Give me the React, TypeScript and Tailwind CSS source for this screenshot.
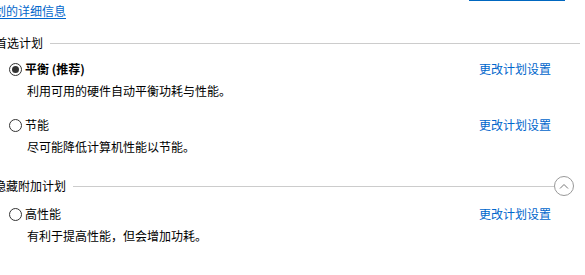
import React from 'react';

const Radio = ({ checked }: { checked?: boolean }) => (
  <span className="flex h-[13px] w-[13px] shrink-0 items-center justify-center rounded-full border border-[#333]">
    {checked && <span className="h-[7px] w-[7px] rounded-full bg-[#333]" />}
  </span>
);

const PlanRow = ({ name, desc, checked, bold }: { name: string; desc: string; checked?: boolean; bold?: boolean }) => (
  <div>
    <div className="flex items-center justify-between pl-[9px] pr-[34px]">
      <div className="flex items-center gap-[3px]">
        <Radio checked={checked} />
        <span className={bold ? 'font-bold' : ''}>{name}</span>
      </div>
      <a className="text-[#0066cc] cursor-pointer">更改计划设置</a>
    </div>
    <div className="mt-[6px] pl-[27px]">{desc}</div>
  </div>
);

export default function App() {
  return (
    <div className="h-[275px] w-[585px] overflow-hidden bg-white text-[12px] leading-[16px] text-black font-['Noto_Sans_CJK_SC','Microsoft_YaHei',sans-serif]">
      <div className="flex h-px">
        <div className="ml-[469px] w-[96px] bg-[#0067c0]" />
      </div>
      <a className="mt-[2px] ml-[-18px] block w-fit text-[#0066cc] underline underline-offset-2 cursor-pointer">计划的详细信息</a>

      <div className="mt-[16px] ml-[-5px] flex items-center gap-[7px] pr-[5px]">
        <span>首选计划</span>
        <div className="h-px flex-1 bg-[#cccccc]" />
      </div>

      <div className="mt-[10px]">
        <PlanRow name="平衡 (推荐)" desc="利用可用的硬件自动平衡功耗与性能。" checked bold />
      </div>
      <div className="mt-[18px]">
        <PlanRow name="节能" desc="尽可能降低计算机性能以节能。" />
      </div>

      <div className="mt-[21px] ml-[-6px] flex items-center pr-[11px]">
        <span>隐藏附加计划</span>
        <div className="ml-[7px] h-px flex-1 bg-[#cccccc]" />
        <span className="flex h-[20px] w-[20px] items-center justify-center rounded-full border border-[#999]">
          <svg width="10" height="6" viewBox="0 0 10 6" fill="none">
            <path d="M1 5.5 L5 1.5 L9 5.5" stroke="#777" strokeWidth="1" />
          </svg>
        </span>
      </div>

      <div className="mt-[10px]">
        <PlanRow name="高性能" desc="有利于提高性能，但会增加功耗。" />
      </div>
    </div>
  );
}
